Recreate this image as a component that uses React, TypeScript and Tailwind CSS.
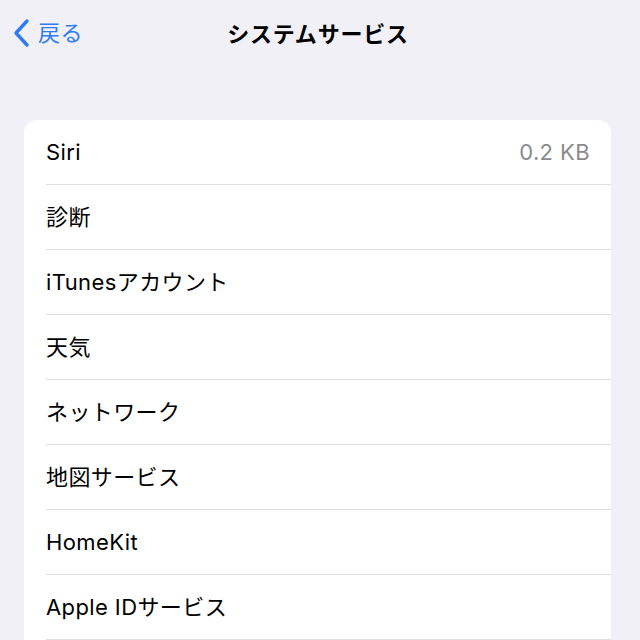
const rows: { label: string; value?: string }[] = [
  { label: 'Siri', value: '0.2 KB' },
  { label: '診断' },
  { label: 'iTunesアカウント' },
  { label: '天気' },
  { label: 'ネットワーク' },
  { label: '地図サービス' },
  { label: 'HomeKit' },
  { label: 'Apple IDサービス' },
];

export default function App() {
  return (
    <div
      className="w-[640px] h-[640px] overflow-hidden bg-[#f1f0f6] text-black"
      style={{ fontFamily: 'Inter, "Noto Sans CJK JP", sans-serif' }}
    >
      <div className="relative h-[68px] flex items-center justify-center">
        <div className="absolute left-[12px] top-[18px] flex items-center gap-[6px] text-[#2f7bf5]">
          <svg width="20" height="30" viewBox="0 0 20 30" fill="none">
            <path d="M15 3 L4 15 L15 27" stroke="currentColor" strokeWidth="3.4" strokeLinecap="round" strokeLinejoin="round" />
          </svg>
          <span className="text-[22px] leading-none tracking-[0.5px]">戻る</span>
        </div>
        <h1 className="text-[22px] font-bold tracking-[0.8px] ml-[-4px]">システムサービス</h1>
      </div>
      <div className="h-[52px]" />
      <div className="ml-[24px] w-[587px] bg-white rounded-t-[13px] overflow-hidden pb-[40px]">
        {rows.map((r) => (
          <div key={r.label} className="pl-[22px]">
            <div className="h-[64px] flex items-center justify-between pr-[21px]">
              <span className="text-[22px] tracking-[0.4px]">{r.label}</span>
              {r.value && <span className="text-[22px] text-[#8a8a8e] tracking-[0.4px]">{r.value}</span>}
            </div>
            <div className="h-px bg-[#dedee3]" />
          </div>
        ))}
      </div>
    </div>
  );
}
